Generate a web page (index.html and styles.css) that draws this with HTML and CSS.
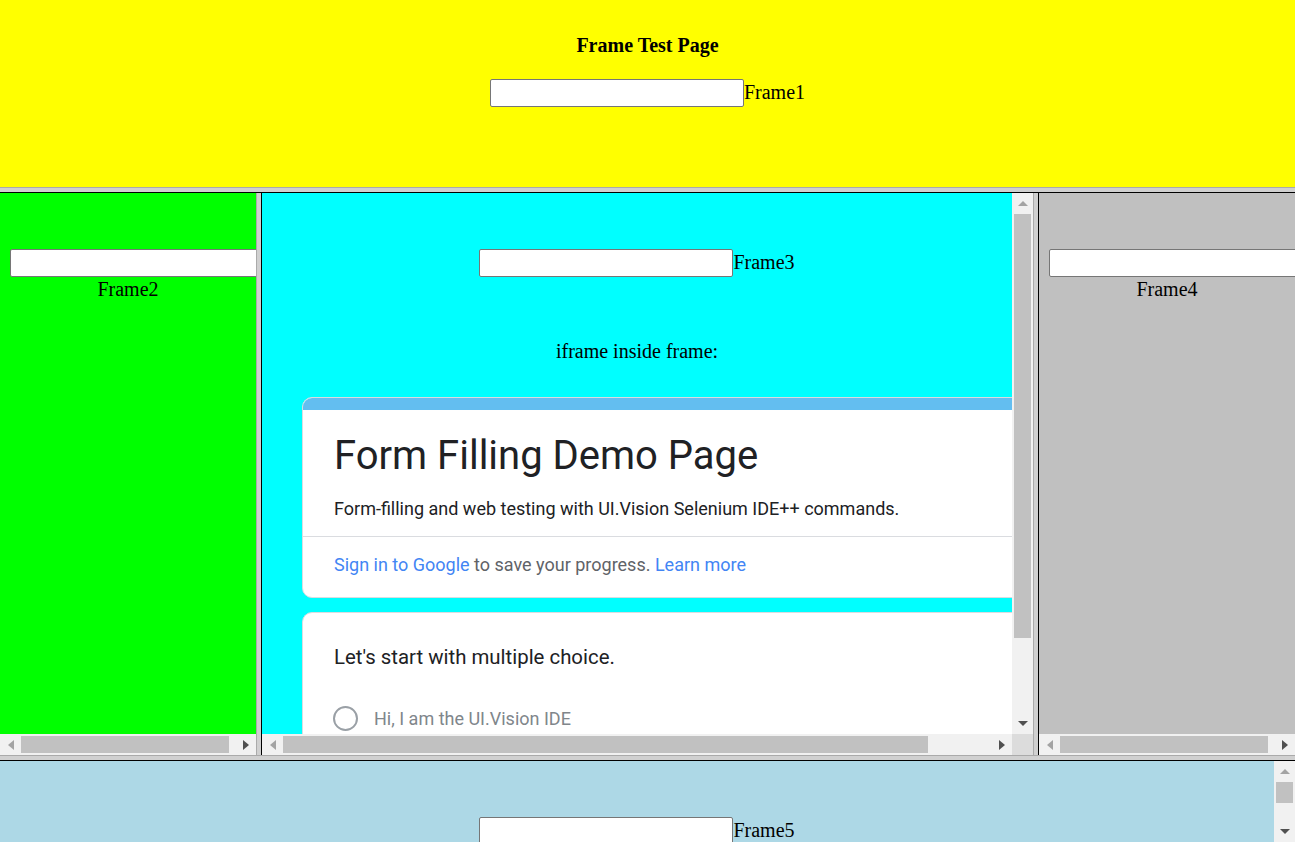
FILE: index.html
```html
<!DOCTYPE html>
<html>
<head>
<meta charset="utf-8">
<title>Frame Test Page</title>
<link rel="stylesheet" href="styles.css">
</head>
<body>
<div class="frameset">
  <section class="frame frame1">
    <div class="frame1-title">Frame Test Page</div>
    <div class="field-row"><input class="field" type="text"><span class="label">Frame1</span></div>
  </section>

  <div class="hborder"></div>

  <div class="midrow">
    <section class="frame side frame2">
      <div class="view">
        <div class="stack">
          <input class="field block" type="text">
          <div class="label-line">Frame2</div>
        </div>
      </div>
      <div class="hscroll">
        <div class="sb-btn"><svg class="arr off" width="6" height="10" viewBox="0 0 6 10"><polygon points="6,0 6,10 0,5"/></svg></div>
        <div class="sb-track"><div class="sb-thumb h side-thumb"></div></div>
        <div class="sb-btn"><svg class="arr on" width="6" height="10" viewBox="0 0 6 10"><polygon points="0,0 0,10 6,5"/></svg></div>
      </div>
    </section>

    <div class="vborder"></div>

    <section class="frame frame3">
      <div class="view">
        <div class="mid-content">
          <div class="field-row"><input class="field" type="text"><span class="label">Frame3</span></div>
          <p class="caption">iframe inside frame:</p>
          <div class="embed">
            <div class="card card-head">
              <div class="card-bar"></div>
              <div class="card-body">
                <div class="form-title">Form Filling Demo Page</div>
                <div class="form-desc">Form-filling and web testing with UI.Vision Selenium IDE++ commands.</div>
              </div>
              <div class="card-divider"></div>
              <div class="card-signin"><span class="link">Sign in to Google</span> to save your progress. <span class="link">Learn more</span></div>
            </div>
            <div class="card card-question">
              <div class="question">Let's start with multiple choice.</div>
              <div class="choice"><span class="radio"></span><span class="choice-text">Hi, I am the UI.Vision IDE</span></div>
            </div>
          </div>
        </div>
      </div>
      <div class="vscroll">
        <div class="sb-btn"><svg class="arr off" width="10" height="5" viewBox="0 0 10 5"><polygon points="0,5 10,5 5,0"/></svg></div>
        <div class="sb-track"><div class="sb-thumb v mid-vthumb"></div></div>
        <div class="sb-btn"><svg class="arr on" width="10" height="5" viewBox="0 0 10 5"><polygon points="0,0 10,0 5,5"/></svg></div>
      </div>
      <div class="hscroll">
        <div class="sb-btn"><svg class="arr off" width="6" height="10" viewBox="0 0 6 10"><polygon points="6,0 6,10 0,5"/></svg></div>
        <div class="sb-track"><div class="sb-thumb h mid-hthumb"></div></div>
        <div class="sb-btn"><svg class="arr on" width="6" height="10" viewBox="0 0 6 10"><polygon points="0,0 0,10 6,5"/></svg></div>
      </div>
      <div class="sb-corner"></div>
    </section>

    <div class="vborder"></div>

    <section class="frame side frame4">
      <div class="view">
        <div class="stack">
          <input class="field block" type="text">
          <div class="label-line">Frame4</div>
        </div>
      </div>
      <div class="hscroll">
        <div class="sb-btn"><svg class="arr off" width="6" height="10" viewBox="0 0 6 10"><polygon points="6,0 6,10 0,5"/></svg></div>
        <div class="sb-track"><div class="sb-thumb h side-thumb"></div></div>
        <div class="sb-btn"><svg class="arr on" width="6" height="10" viewBox="0 0 6 10"><polygon points="0,0 0,10 6,5"/></svg></div>
      </div>
    </section>
  </div>

  <div class="hborder"></div>

  <section class="frame frame5">
    <div class="view">
      <div class="bottom-content">
        <div class="field-row"><input class="field" type="text"><span class="label">Frame5</span></div>
      </div>
    </div>
    <div class="vscroll">
      <div class="sb-btn"><svg class="arr off" width="10" height="5" viewBox="0 0 10 5"><polygon points="0,5 10,5 5,0"/></svg></div>
      <div class="sb-track"><div class="sb-thumb v bottom-vthumb"></div></div>
      <div class="sb-btn"><svg class="arr on" width="10" height="5" viewBox="0 0 10 5"><polygon points="0,0 10,0 5,5"/></svg></div>
    </div>
  </section>
</div>
</body>
</html>
```

FILE: styles.css
```css
html, body {
  margin: 0;
  padding: 0;
}

body {
  width: 1295px;
  height: 842px;
  overflow: hidden;
  font-family: "Liberation Serif", "Times New Roman", serif;
  font-size: 20px;
  line-height: 23px;
  color: #000;
}

.frameset {
  display: grid;
  grid-template-rows: 187px 6px 562px 6px 81px;
  height: 842px;
}

.hborder {
  box-sizing: border-box;
  background: #d0d0d0;
  border-top: 1px solid #aaaaaa;
  border-bottom: 1px solid #000;
}

.vborder {
  box-sizing: border-box;
  background: #d0d0d0;
  border-left: 1px solid #aaaaaa;
  border-right: 1px solid #000;
}

.midrow {
  display: grid;
  grid-template-columns: 256px 6px 771px 6px 256px;
  min-height: 0;
}

.frame {
  overflow: hidden;
  min-width: 0;
  min-height: 0;
}

.view {
  overflow: hidden;
  min-width: 0;
  min-height: 0;
}

/* ---------- Frame 1 ---------- */
.frame1 {
  background: #ffff00;
  text-align: center;
  padding-top: 34px;
  box-sizing: border-box;
}

.frame1-title {
  font-weight: bold;
}

.frame1 .field-row {
  margin-top: 22px;
}

.field-row {
  text-align: center;
  white-space: nowrap;
}

.field {
  box-sizing: border-box;
  width: 254px;
  height: 28px;
  margin: 0;
  padding: 2px 2px 0;
  border: 1px solid #767676;
  border-radius: 2px;
  background: #fff;
  font-family: "Liberation Sans", Arial, sans-serif;
  font-size: 16.67px;
  vertical-align: baseline;
}

.field.block {
  display: block;
}

/* ---------- side frames ---------- */
.side {
  display: grid;
  grid-template-rows: 541px 21px;
}

.frame2 { background: #00ff00; }
.frame4 { background: #c0c0c0; }

.stack {
  padding: 56px 10px 0;
}

.label-line {
  text-align: center;
  padding-top: 1px;
}

/* ---------- Frame 3 ---------- */
.frame3 {
  background: #00ffff;
  display: grid;
  grid-template-columns: 750px 21px;
  grid-template-rows: 541px 21px;
}

.mid-content {
  padding-top: 56px;
  width: 750px;
}

.caption {
  margin: 63px 0 0;
  text-align: center;
}

.embed {
  margin: 34px 0 0 40px;
  width: 800px;
  font-family: Roboto, "Liberation Sans", Arial, sans-serif;
}

.card {
  background: #fff;
  border: 1px solid #dadce0;
  border-radius: 10px;
  overflow: hidden;
}

.card-bar {
  height: 12px;
  background: #63bef0;
}

.card-body {
  padding: 21px 30px 0 31px;
}

.form-title {
  font-size: 40px;
  line-height: 50px;
  color: #202124;
}

.form-desc {
  margin-top: 16px;
  font-size: 18px;
  line-height: 24px;
  color: #202124;
}

.card-divider {
  margin-top: 15px;
  height: 1px;
  background: #dadce0;
}

.card-signin {
  padding: 16px 30px 20px 31px;
  font-size: 18px;
  line-height: 24px;
  color: #5f6368;
}

.link {
  color: #4285f4;
}

.card-question {
  margin-top: 14px;
  padding: 31px 30px 0 31px;
  height: 200px;
}

.question {
  font-size: 20.4px;
  line-height: 26px;
  color: #202124;
}

.choice {
  display: flex;
  align-items: center;
  gap: 16px;
  margin-top: 36px;
  margin-left: -1px;
  height: 25px;
}

.radio {
  box-sizing: border-box;
  width: 25px;
  height: 25px;
  border: 2.5px solid #9aa0a6;
  border-radius: 50%;
  flex: none;
}

.choice-text {
  font-size: 18px;
  color: #80868b;
}

/* ---------- Frame 5 ---------- */
.frame5 {
  background: #add8e6;
  display: grid;
  grid-template-columns: 1274px 21px;
}

.bottom-content {
  padding-top: 56px;
}

/* ---------- scrollbars ---------- */
.hscroll {
  display: flex;
  background: #f1f1f1;
  height: 21px;
}

.vscroll {
  display: flex;
  flex-direction: column;
  background: #f1f1f1;
  width: 21px;
  min-height: 0;
}

.sb-btn {
  flex: none;
  width: 21px;
  height: 21px;
  display: flex;
  align-items: center;
  justify-content: center;
}

.sb-track {
  flex: 1;
  min-width: 0;
  min-height: 0;
}

.sb-thumb {
  background: #c1c1c1;
}

.sb-thumb.h {
  height: 17px;
  margin-top: 2px;
}

.sb-thumb.v {
  width: 17px;
  margin-left: 2px;
}

.side-thumb { width: 208px; }
.mid-hthumb { width: 645px; }
.mid-vthumb { height: 424px; }
.bottom-vthumb { height: 21px; }

.sb-corner {
  background: #dcdcdc;
}

.arr { display: block; }
.arr.off { fill: #a3a3a3; }
.arr.on { fill: #505050; }
```
